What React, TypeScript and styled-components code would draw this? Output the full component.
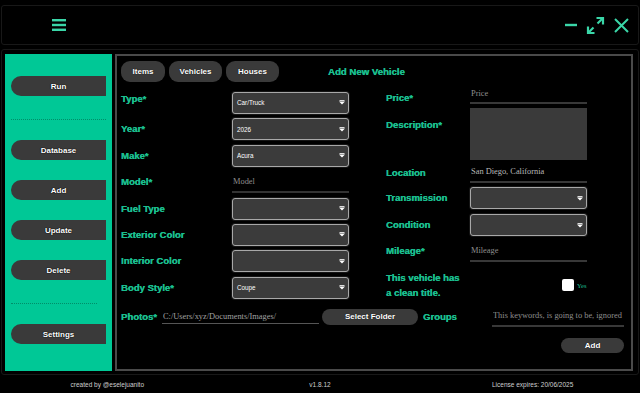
import React from "react";
import styled, { createGlobalStyle } from "styled-components";

const GREEN = "#00c896";
const LABEL = "#1bbf8f";
const ICON = "#3ad6a8";
const PILL = "#3a3a3a";

const Global = createGlobalStyle`
  html, body { margin: 0; padding: 0; background: #000; }
  body { width: 640px; height: 393px; overflow: hidden; font-family: "Liberation Sans", Arial, sans-serif; }
  * { box-sizing: border-box; }
  #root { width: 640px; height: 393px; }
`;

const Window = styled.div`
  width: 640px;
  height: 393px;
  background: #000;
  display: flex;
  flex-direction: column;
  padding: 5px 1px 0;
`;

const Header = styled.header`
  height: 40px;
  border: 1px solid #181818;
  border-radius: 3px;
  display: flex;
  align-items: center;
  justify-content: space-between;
  padding: 0 9px 0 50px;
`;

const WinControls = styled.div`
  display: flex;
  align-items: center;
  gap: 9px;
`;

const Frame = styled.div`
  margin-top: 4px;
  height: 326px;
  border: 1px solid #181818;
  border-radius: 3px;
  display: flex;
  gap: 3px;
  padding: 4px 5px 3px 3px;
`;

const Sidebar = styled.nav`
  width: 107px;
  background: ${GREEN};
  display: flex;
  flex-direction: column;
  gap: 20px;
  padding: 22px 6px 0;
`;

const SideButton = styled.button`
  width: 95px;
  height: 20px;
  flex: none;
  border: none;
  border-radius: 10px 0 0 10px;
  background: ${PILL};
  color: #fff;
  font: bold 8px "Liberation Sans", Arial, sans-serif;
  text-shadow: 0 0 1px #000, 0 0 1px #000;
  padding: 0;
  display: flex;
  align-items: center;
  justify-content: center;
`;

const SideDivider = styled.div<{ $w: number }>`
  width: ${(p) => p.$w}px;
  height: 1px;
  flex: none;
  margin-top: 3px;
  border-top: 1px dotted rgba(0, 70, 50, 0.45);
`;

const Main = styled.main`
  flex: 1;
  border: 2px solid #4a4a4a;
  display: flex;
  flex-direction: column;
  padding: 5px 7px 0 4px;
`;

const TopRow = styled.div`
  display: flex;
  align-items: center;
  height: 21px;
  flex: none;
`;

const Tabs = styled.div`
  display: flex;
  gap: 4px;
`;

const Tab = styled.button<{ $w: number }>`
  width: ${(p) => p.$w}px;
  height: 21px;
  border: none;
  border-radius: 9px;
  background: ${PILL};
  color: #fff;
  font: bold 8px "Liberation Sans", Arial, sans-serif;
  text-shadow: 0 0 1px #000;
  padding: 0;
`;

const Title = styled.h1`
  margin: 0 0 0 49px;
  font: bold 9.6px "Liberation Sans", Arial, sans-serif;
  color: ${LABEL};
  text-shadow: 0.3px 0 0 ${LABEL};
`;

const Columns = styled.div`
  display: flex;
  gap: 37px;
  flex: none;
`;

const LeftCol = styled.div`
  width: 228px;
  display: flex;
  flex-direction: column;
  padding-top: 7.8px;
`;

const RightCol = styled.div`
  width: 201px;
  display: flex;
  flex-direction: column;
`;

const FormRow = styled.div<{ $h: number; $mt?: number; $align?: string }>`
  display: flex;
  align-items: ${(p) => p.$align || "center"};
  height: ${(p) => p.$h}px;
  margin-top: ${(p) => p.$mt || 0}px;
  flex: none;
`;

const Label = styled.label<{ $w: number; $pt?: number; $pb?: number; $ml?: number; $lh?: number }>`
  width: ${(p) => p.$w}px;
  flex: none;
  margin-left: ${(p) => p.$ml || 0}px;
  padding-top: ${(p) => p.$pt || 0}px;
  padding-bottom: ${(p) => p.$pb || 0}px;
  font: bold 9.5px/${(p) => p.$lh || 12}px "Liberation Sans", Arial, sans-serif;
  color: ${LABEL};
  text-shadow: 0.3px 0 0 ${LABEL};
  white-space: nowrap;
`;

const SelectBox = styled.div`
  width: 117px;
  height: 22px;
  flex: none;
  border: 1px solid #a8a8a8;
  border-radius: 3px;
  background: #3b3b3b;
  box-shadow: 0 0 0 1px #151515;
  display: flex;
  align-items: center;
  justify-content: space-between;
  padding: 0 3px 0 4px;
  color: #fff;
  font: 6.3px "Liberation Sans", Arial, sans-serif;
`;

const TextInput = styled.input<{ $w: number; $h: number; $line: number; $lineColor: string; $ml?: number; $color?: string }>`
  width: ${(p) => p.$w}px;
  height: ${(p) => p.$h}px;
  flex: none;
  margin: 0 0 0 ${(p) => p.$ml || 0}px;
  background: transparent;
  border: none;
  border-bottom: ${(p) => p.$line}px solid ${(p) => p.$lineColor};
  padding: 0 1px;
  outline: none;
  color: ${(p) => p.$color || "#b8b8b8"};
  font: 8.4px "Liberation Serif", "Times New Roman", serif;
  &::placeholder { color: #8e8e8e; opacity: 1; }
`;

const TextArea = styled.textarea`
  width: 117px;
  height: 52px;
  flex: none;
  background: #3a3a3a;
  border: none;
  resize: none;
  outline: none;
  margin: 0;
`;

const CheckWrap = styled.div`
  width: 117px;
  display: flex;
  justify-content: flex-end;
  align-items: center;
  gap: 3px;
`;

const Check = styled.input`
  appearance: none;
  width: 12px;
  height: 12px;
  margin: 0;
  background: #fff;
  border-radius: 2px;
  border: none;
`;

const Yes = styled.span`
  color: ${LABEL};
  font: 6.5px "Liberation Serif", serif;
  width: 10px;
`;

const BottomRow = styled.div`
  display: flex;
  align-items: center;
  height: 32px;
  flex: none;
`;

const PillButton = styled.button<{ $w: number; $h: number; $ml?: number }>`
  width: ${(p) => p.$w}px;
  height: ${(p) => p.$h}px;
  flex: none;
  margin-left: ${(p) => p.$ml || 0}px;
  border: none;
  border-radius: 8px;
  background: ${PILL};
  color: #fff;
  font: bold 8px "Liberation Sans", Arial, sans-serif;
  text-shadow: 0 0 1px #000;
  padding: 0;
`;

const AddRow = styled.div`
  display: flex;
  justify-content: flex-end;
  margin-top: 5px;
`;

const Footer = styled.footer`
  height: 18px;
  display: grid;
  grid-template-columns: 1fr 1fr 1fr;
  align-items: center;
  text-align: center;
  color: #cfcfcf;
  font: 6.5px "Liberation Sans", Arial, sans-serif;
`;

const Caret = () => (
  <svg width="6" height="5" viewBox="0 0 6 5">
    <rect x="0.5" y="0" width="5" height="1" fill="#ddd" />
    <path d="M0 1.5 H6 L3 4.5 Z" fill="#fff" />
  </svg>
);

const Select = ({ value }: { value?: string }) => (
  <SelectBox>
    <span>{value || ""}</span>
    <Caret />
  </SelectBox>
);

const Hamburger = () => (
  <svg width="14" height="14" viewBox="0 0 14 14">
    <rect x="0" y="1" width="14" height="2.4" fill={ICON} />
    <rect x="0" y="5.8" width="14" height="2.4" fill={ICON} />
    <rect x="0" y="10.6" width="14" height="2.4" fill={ICON} />
  </svg>
);

const Minus = () => (
  <svg width="12" height="4" viewBox="0 0 12 4">
    <rect x="0" y="0.8" width="12" height="2.4" fill={ICON} />
  </svg>
);

const Expand = () => (
  <svg width="19" height="19" viewBox="0 0 19 19" fill="none" stroke={ICON} strokeWidth="2.2">
    <path d="M2 17 L7.5 11.5" />
    <path d="M2 10.5 V17 H8.5" />
    <path d="M11.5 7.5 L17 2" />
    <path d="M10.5 2 H17 V8.5" />
  </svg>
);

const Close = () => (
  <svg width="15" height="15" viewBox="0 0 15 15" fill="none" stroke={ICON} strokeWidth="2">
    <path d="M1 1 L14 14 M14 1 L1 14" />
  </svg>
);

export default function App() {
  return (
    <>
      <Global />
      <Window>
        <Header>
          <Hamburger />
          <WinControls>
            <Minus />
            <Expand />
            <Close />
          </WinControls>
        </Header>
        <Frame>
          <Sidebar>
            <SideButton>Run</SideButton>
            <SideDivider $w={95} />
            <SideButton>Database</SideButton>
            <SideButton>Add</SideButton>
            <SideButton>Update</SideButton>
            <SideButton>Delete</SideButton>
            <SideDivider $w={86} />
            <SideButton>Settings</SideButton>
          </Sidebar>
          <Main>
            <TopRow>
              <Tabs>
                <Tab $w={44}>Items</Tab>
                <Tab $w={53}>Vehicles</Tab>
                <Tab $w={53}>Houses</Tab>
              </Tabs>
              <Title>Add New Vehicle</Title>
            </TopRow>
            <Columns>
              <LeftCol>
                <FormRow $h={26.4}>
                  <Label $w={111} $pb={7}>Type*</Label>
                  <Select value="Car/Truck" />
                </FormRow>
                <FormRow $h={26.4}>
                  <Label $w={111}>Year*</Label>
                  <Select value="2026" />
                </FormRow>
                <FormRow $h={26.4}>
                  <Label $w={111}>Make*</Label>
                  <Select value="Acura" />
                </FormRow>
                <FormRow $h={26.4}>
                  <Label $w={111}>Model*</Label>
                  <TextInput $w={117} $h={22} $line={2} $lineColor="#333" placeholder="Model" />
                </FormRow>
                <FormRow $h={26.4}>
                  <Label $w={111}>Fuel Type</Label>
                  <Select />
                </FormRow>
                <FormRow $h={26.4}>
                  <Label $w={111}>Exterior Color</Label>
                  <Select />
                </FormRow>
                <FormRow $h={26.4}>
                  <Label $w={111}>Interior Color</Label>
                  <Select />
                </FormRow>
                <FormRow $h={26.4}>
                  <Label $w={111}>Body Style*</Label>
                  <Select value="Coupe" />
                </FormRow>
              </LeftCol>
              <RightCol>
                <FormRow $h={20} $mt={2} $align="flex-end">
                  <Label $w={84}>Price*</Label>
                  <TextInput $w={117} $h={20} $line={2} $lineColor="#383838" placeholder="Price" />
                </FormRow>
                <FormRow $h={52} $mt={4} $align="flex-start">
                  <Label $w={84} $pt={11}>Description*</Label>
                  <TextArea />
                </FormRow>
                <FormRow $h={21} $mt={2}>
                  <Label $w={84}>Location</Label>
                  <TextInput $w={117} $h={21} $line={2} $lineColor="#383838" defaultValue="San Diego, California" />
                </FormRow>
                <FormRow $h={22} $mt={4}>
                  <Label $w={84}>Transmission</Label>
                  <Select />
                </FormRow>
                <FormRow $h={22} $mt={5}>
                  <Label $w={84}>Condition</Label>
                  <Select />
                </FormRow>
                <FormRow $h={22} $mt={4}>
                  <Label $w={84}>Mileage*</Label>
                  <TextInput $w={117} $h={22} $line={2} $lineColor="#383838" placeholder="Mileage" />
                </FormRow>
                <FormRow $h={30} $mt={8}>
                  <Label $w={84} $lh={15.5}>
                    This vehicle has
                    <br />a clean title.
                  </Label>
                  <CheckWrap>
                    <Check type="checkbox" />
                    <Yes>Yes</Yes>
                  </CheckWrap>
                </FormRow>
              </RightCol>
            </Columns>
            <BottomRow>
              <Label $w={41}>Photos*</Label>
              <TextInput
                $w={157}
                $h={14}
                $line={1}
                $lineColor="#555"
                $color="#a0a0a0"
                defaultValue="C:/Users/xyz/Documents/Images/"
              />
              <PillButton $w={96} $h={16} $ml={3}>
                Select Folder
              </PillButton>
              <Label $w={69} $ml={5}>Groups</Label>
              <TextInput
                $w={132}
                $h={20}
                $line={2}
                $lineColor="#383838"
                placeholder="This keywords, is going to be, ignored"
              />
            </BottomRow>
            <AddRow>
              <PillButton $w={63} $h={15}>
                Add
              </PillButton>
            </AddRow>
          </Main>
        </Frame>
        <Footer>
          <span>created by @eselejuanito</span>
          <span>v1.8.12</span>
          <span>License expires: 20/06/2025</span>
        </Footer>
      </Window>
    </>
  );
}
